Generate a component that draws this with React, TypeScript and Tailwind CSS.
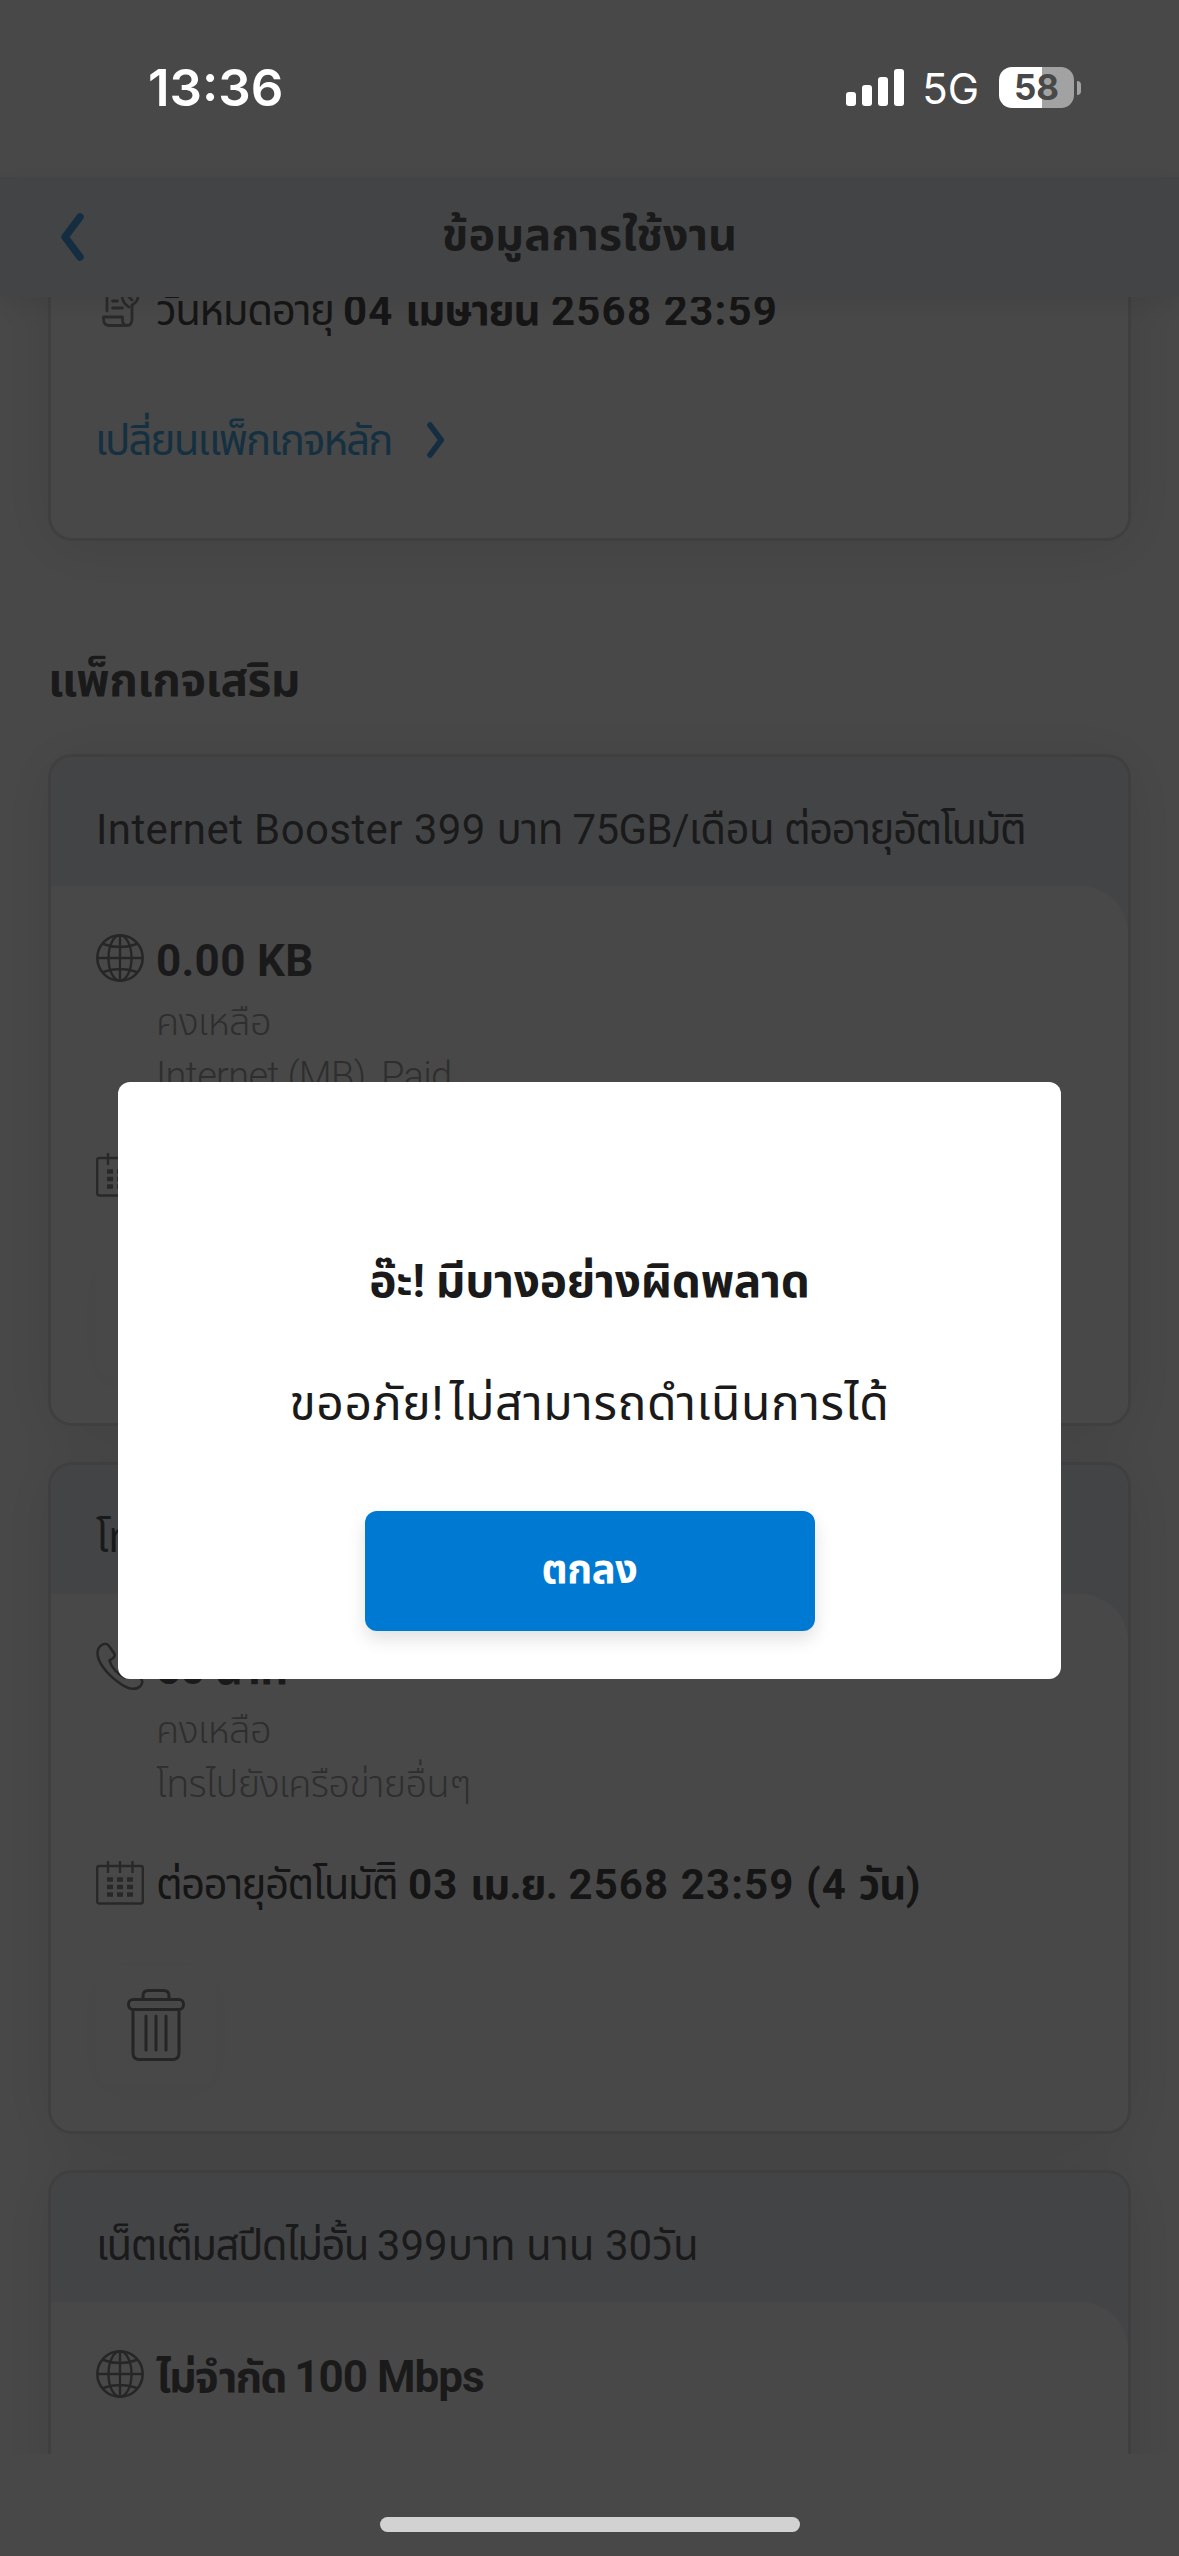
import * as React from "react";

export default function App() {
  return (
    <div className="relative flex h-[2556px] w-[1179px] flex-col overflow-hidden bg-white font-[Roboto,'Noto_Sans_Thai','Noto_Sans',sans-serif] text-[#1a1a1a]">
      <div className="h-[177px] shrink-0" />
      <header className="z-10 grid h-[120px] shrink-0 grid-cols-[1fr_auto_1fr] items-center bg-[#e7ecf4] px-[60px] shadow-[0_6px_24px_rgba(0,0,0,0.12)]">
        <Chevron className="h-12 w-6 -scale-x-100" />
        <h1 className="pb-[5px] text-[45px] leading-[100px] font-bold">ข้อมูลการใช้งาน</h1>
      </header>

      <main className="h-[2157px] overflow-hidden px-12">
        <section className="-mt-12 h-[292px] rounded-3xl border-3 border-[#d3d3d3] bg-white px-[45px] shadow-[0_6px_60px_rgba(0,0,0,0.14)]">
          <div className="mt-[10px] flex h-[96px] items-center text-[42px] whitespace-nowrap text-black">
            <ScrollIcon />
            <span className="ml-3 w-[187px] tracking-[-1.4px]">วันหมดอายุ</span>
            <b className="tracking-[1.2px]">
              04 <span className="tracking-[-1.2px]">เมษายน</span> 2568 23:59
            </b>
          </div>
          <div className="mt-[50px] -ml-px flex h-16 items-center text-[42px] tracking-[-1.9px] text-[#0089d8]">
            เปลี่ยนแพ็กเกจหลัก
            <Chevron className="ml-[35px] h-9 w-[18px]" />
          </div>
        </section>

        <h2 className="mt-[107px] h-[64px] text-[46px] leading-[64px] font-bold tracking-[-0.6px]">
          แพ็กเกจเสริม
        </h2>

        <div className="mt-[42px] flex flex-col gap-9">
          <PackageCard
            title={
              <>
                <span className="tracking-[0.4px]">Internet Booster 399 </span>
                <span className="tracking-[-0.6px]">บาท 75GB/เดือน </span>
                <span className="tracking-[-1.6px]">ต่ออายุอัตโนมัติ</span>
              </>
            }
          >
            <Balance
              icon={<GlobeIcon />}
              amount={<span className="tracking-[0.3px]">0.00 KB</span>}
              note="Internet (MB)_Paid"
            />
            <Renewal />
          </PackageCard>
          <PackageCard title={<span className="tracking-[-0.8px]">โทรทุกเครือข่าย</span>}>
            <Balance
              icon={<PhoneIcon />}
              amount={<span className="tracking-[-1px]">50 นาที</span>}
              note="โทรไปยังเครือข่ายอื่นๆ"
            />
            <Renewal />
          </PackageCard>
          <PackageCard
            title={
              <>
                <span className="tracking-[-1.6px]">เน็ตเต็มสปีดไม่อั้น </span>
                <span>399บาท นาน 30วัน</span>
              </>
            }
          >
            <Balance
              icon={<GlobeIcon />}
              amount={
                <>
                  <span className="text-[43px] tracking-[-2px]">ไม่จำกัด </span>
                  <span className="tracking-[-1px]">100 Mbps</span>
                </>
              }
            />
          </PackageCard>
        </div>
      </main>

      <div className="absolute inset-0 z-20 flex flex-col bg-[#1a1a1a]/80">
        <StatusBar />
        <ErrorDialog />
        <div className="mx-auto mt-auto mb-6 h-[15px] w-[420px] rounded-full bg-[#d2d2d2]" />
      </div>
    </div>
  );
}

function PackageCard({ title, children }: { title: React.ReactNode; children: React.ReactNode }) {
  return (
    <article className="h-[672px] shrink-0 overflow-hidden rounded-3xl border-3 border-[#d3d3d3] bg-[#e7ecf4] shadow-[0_6px_60px_rgba(0,0,0,0.14)]">
      <h3 className="h-[129px] px-[45px] text-[42px] leading-[146px] whitespace-nowrap">{title}</h3>
      <div className="h-full rounded-tr-[48px] bg-white px-[45px] pt-12">{children}</div>
    </article>
  );
}

function Balance({
  icon,
  amount,
  note,
}: {
  icon: React.ReactNode;
  amount: React.ReactNode;
  note?: string;
}) {
  return (
    <div className="flex gap-3">
      {icon}
      <div className="whitespace-nowrap">
        <p className="h-[61px] text-[44px] leading-[54px] font-bold">{amount}</p>
        {note ? (
          <div className="text-[38px] leading-[54px] font-light tracking-[-0.7px] text-[#7e7e7e]">
            <p>คงเหลือ</p>
            <p>{note}</p>
          </div>
        ) : null}
      </div>
    </div>
  );
}

function Renewal() {
  return (
    <>
      <div className="mt-[40px] flex h-16 items-center text-[42px] whitespace-nowrap text-black">
        <CalendarIcon />
        <span className="mt-[2px] ml-3 w-[252px] tracking-[-1.6px]">ต่ออายุอัตโนมัติิ</span>
        <b className="mt-[2px] tracking-[1.1px]">
          03 <span className="tracking-[-1px]">เม.ย.</span> 2568 23:59 (4{" "}
          <span className="tracking-[-0.8px]">วัน)</span>
        </b>
      </div>
      <button className="mt-[50px] grid size-[120px] place-items-center rounded-[18px] bg-white shadow-[0_6px_36px_rgba(0,0,0,0.05)]">
        <TrashIcon />
      </button>
    </>
  );
}

function ErrorDialog() {
  return (
    <div
      role="dialog"
      className="mx-auto mt-[905px] flex h-[597px] w-[943px] flex-col items-center rounded-xl bg-white pt-[159px]"
    >
      <h2 className="h-[80px] text-[46px] leading-[80px] font-bold tracking-[-0.3px]">
        อ๊ะ! มีบางอย่างผิดพลาด
      </h2>
      <p className="mt-[43px] h-[80px] text-[48px] leading-[80px] tracking-[0.6px] [word-spacing:-7px]">
        ขออภัย! ไม่สามารถดำเนินการได้
      </p>
      <button className="mt-[67px] h-[120px] w-[450px] rounded-xl bg-[#0079d2] pb-[3px] text-[40px] font-bold tracking-[-0.5px] text-white shadow-[0_8px_18px_rgba(0,0,0,0.12)]">
        ตกลง
      </button>
    </div>
  );
}

function StatusBar() {
  return (
    <div className="mb-[2px] flex h-[175px] shrink-0 items-center pr-[98px] pl-[148px] font-[Inter,sans-serif] text-white">
      <span className="mt-[2px] text-[51px] font-semibold">13:36</span>
      <svg viewBox="0 0 58 37" className="ml-auto h-[37px] w-[58px] fill-white">
        <rect x="0" y="23" width="10" height="14" rx="3" />
        <rect x="16" y="16" width="10" height="21" rx="3" />
        <rect x="32" y="8" width="10" height="29" rx="3" />
        <rect x="48" y="0" width="10" height="37" rx="3" />
      </svg>
      <span className="mt-[2px] ml-[18px] text-[42px]">5G</span>
      <div className="ml-5 flex h-[41px] w-[75px] items-center justify-center rounded-[13px] bg-[linear-gradient(90deg,#fff_57%,#a2a2a2_57%)] text-[35px] font-bold text-[#484848]">
        58
      </div>
      <div className="ml-[3px] h-[14px] w-[4px] rounded-r-full bg-[#a2a2a2]" />
    </div>
  );
}

function Chevron({ className }: { className: string }) {
  return (
    <svg
      viewBox="0 0 24 48"
      className={className}
      fill="none"
      stroke="#0078d4"
      strokeWidth="7.5"
      strokeLinecap="round"
      strokeLinejoin="round"
    >
      <path d="M4 4 L19 24 L4 44" />
    </svg>
  );
}

function GlobeIcon() {
  return (
    <svg viewBox="0 0 48 48" className="size-12 shrink-0" fill="none" stroke="#565656" strokeWidth="2.4">
      <circle cx="24" cy="24" r="22.7" strokeWidth="2.6" />
      <ellipse cx="24" cy="24" rx="11.5" ry="22.7" />
      <path d="M24 1v46M1 24h46M7 10q17 6 34 0M7 38q17 -6 34 0" />
    </svg>
  );
}

function PhoneIcon() {
  return (
    <svg viewBox="0 0 48 48" className="size-12 shrink-0" fill="none" stroke="#565656" strokeWidth="2.6">
      <path d="M5 3.5C8 1 11 1 13 4L18.500 12C19.500 14 18 16 13.500 18.500C15 25 22 33 29 35.500C32 31 34 29.500 36 30.500L44 36C47 38 47 41 44.500 44C40 48.500 32 47.500 22 40C10 31 1.500 20 1.500 11C1.500 7 3 5 5 3.500Z" />
    </svg>
  );
}

function CalendarIcon() {
  return (
    <svg viewBox="0 0 48 48" className="size-12 shrink-0" fill="none" stroke="#606060" strokeWidth="2.4">
      <rect x="1.200" y="7" width="45.600" height="37.500" rx="2" />
      <path d="M12 2v12M24 2v12M36.500 2v12" />
      <path d="M11 20.500h26M11 28h26M11 35.500h26" strokeWidth="4.500" strokeDasharray="6 4" />
    </svg>
  );
}

function ScrollIcon() {
  return (
    <svg
      viewBox="0 0 48 48"
      className="size-12 shrink-0"
      fill="none"
      stroke="#686868"
      strokeWidth="2.8"
      strokeLinecap="round"
      strokeLinejoin="round"
    >
      <path d="M11 25V6q0-4 4-4h18M16.500 15h5M16.500 22h10" />
      <path d="M36 20v13q0 6.500-5 6.500H13q-5.500 0-5.500-7V31H26.500v3q0 5.500 4.500 5.500" />
      <path d="M26 10q1 8 7 11M42 10q0 6-6 9M32 10l4 4" />
    </svg>
  );
}

function TrashIcon() {
  return (
    <svg viewBox="0 0 58 72" className="h-[72px] w-[58px]" fill="none" stroke="#505050" strokeWidth="3">
      <path d="M16 10V7q0-5.500 5.500-5.500h15q5.500 0 5.500 5.500v3" />
      <rect x="1.500" y="10.500" width="55" height="10" rx="4.500" />
      <path d="M6 21v43q0 6.500 6.500 6.500h33q6.500 0 6.500-6.500V21" />
      <path d="M19 27v34M29 27v34M39 27v34" strokeLinecap="round" />
    </svg>
  );
}
